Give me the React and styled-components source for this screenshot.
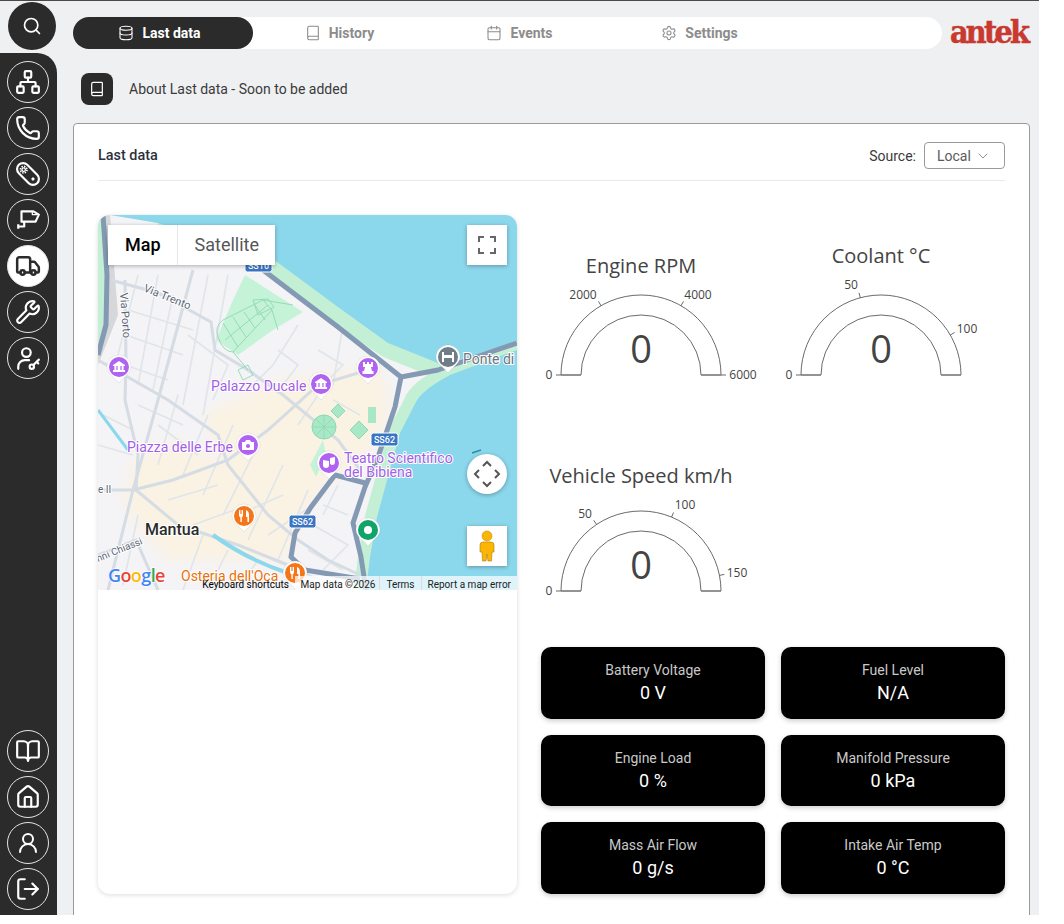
import React from "react";
import styled, { createGlobalStyle } from "styled-components";
import {
  Search,
  Database,
  Book,
  BookOpen,
  Calendar,
  Settings,
  Network,
  Phone,
  Truck,
  Wrench,
  House,
  UserRound,
  LogOut,
  ChevronDown,
} from "lucide-react";

const GlobalStyle = createGlobalStyle`
  body {
    margin: 0;
    background: #fff;
    font-family: Roboto, "Liberation Sans", sans-serif;
  }
`;

const BeltIcon = () => (
  <svg width="26" height="26" viewBox="0 0 24 24" fill="none" stroke="currentColor" strokeWidth="2">
    <rect x="0" y="6.5" width="24" height="11" rx="5.5" transform="rotate(45 12 12)" />
    <circle cx="8" cy="8" r="3" strokeDasharray="1.3 1.05" strokeWidth="1.6" />
    <circle cx="8" cy="8" r="1.6" strokeWidth="1.2" />
    <circle cx="16.6" cy="16.6" r="1.1" fill="currentColor" strokeWidth="0.8" />
  </svg>
);

const CameraIcon = () => (
  <svg width="26" height="26" viewBox="0 0 24 24" fill="none" stroke="currentColor" strokeWidth="2" strokeLinejoin="round">
    <path d="M6 4 H17 L22 7 L19 13.5 H6 Z" />
    <path d="M16 4 V7 H22" strokeWidth="1.2" />
    <path d="M8.5 13.5 V18 H3 M3 16 V20" />
  </svg>
);

const UserKeyIcon = () => (
  <svg width="26" height="26" viewBox="0 0 24 24" fill="none" stroke="currentColor" strokeWidth="2" strokeLinecap="round">
    <circle cx="10.5" cy="7" r="4" />
    <path d="M3 22v-2a6 6 0 0 1 6-6h4" />
    <circle cx="15.5" cy="20" r="2" />
    <path d="M17 18.5l5-5M20 15.5l1.5 1.5" />
  </svg>
);

const topLinks = [
  { key: "network", icon: <Network size={26} /> },
  { key: "phone", icon: <Phone size={26} /> },
  { key: "belt", icon: <BeltIcon /> },
  { key: "camera", icon: <CameraIcon /> },
  { key: "truck", icon: <Truck size={26} strokeWidth={2.3} />, active: true },
  { key: "wrench", icon: <Wrench size={26} /> },
  { key: "user-key", icon: <UserKeyIcon /> },
];

const bottomLinks = [
  { key: "book", icon: <BookOpen size={26} /> },
  { key: "home", icon: <House size={26} /> },
  { key: "user", icon: <UserRound size={24} /> },
  { key: "logout", icon: <LogOut size={26} /> },
];

const tabs = [
  { label: "Last data", icon: Database, active: true },
  { label: "History", icon: Book },
  { label: "Events", icon: Calendar },
  { label: "Settings", icon: Settings },
];

const gauges = [
  {
    title: "Engine RPM",
    titleY: 58,
    max: 6000,
    ticks: [
      { value: 0, label: "0", x: 8, y: 164 },
      { value: 2000, label: "2000", x: 42, y: 84 },
      { value: 4000, label: "4000", x: 157, y: 84 },
      { value: 6000, label: "6000", x: 202, y: 164 },
    ],
  },
  {
    title: "Coolant °C",
    titleY: 48,
    max: 120,
    ticks: [
      { value: 0, label: "0", x: 8, y: 164 },
      { value: 50, label: "50", x: 70, y: 74 },
      { value: 100, label: "100", x: 186, y: 118 },
    ],
  },
  {
    title: "Vehicle Speed km/h",
    titleY: 52,
    max: 160,
    ticks: [
      { value: 0, label: "0", x: 8, y: 164 },
      { value: 50, label: "50", x: 44, y: 87 },
      { value: 100, label: "100", x: 144, y: 78 },
      { value: 150, label: "150", x: 196, y: 146 },
    ],
  },
];

const tiles = [
  { label: "Battery Voltage", value: "0 V" },
  { label: "Fuel Level", value: "N/A" },
  { label: "Engine Load", value: "0 %" },
  { label: "Manifold Pressure", value: "0 kPa" },
  { label: "Mass Air Flow", value: "0 g/s" },
  { label: "Intake Air Temp", value: "0 °C" },
];

const Gauge = ({ title, titleY, max, ticks }) => {
  const cx = 100;
  const cy = 160;
  return (
    <GaugeSvg viewBox="0 0 224 200">
      <GaugeTitle x={cx} y={titleY}>{title}</GaugeTitle>
      <path
        d={`M${cx - 80} ${cy} A80 80 0 0 1 ${cx + 80} ${cy} H${cx + 60} A60 60 0 0 0 ${cx - 60} ${cy} Z`}
        fill="#fff"
        stroke="#444"
        strokeWidth="0.8"
      />
      <path d={`M${cx - 80} ${cy}H${cx - 60}M${cx + 60} ${cy}H${cx + 80}`} stroke="#888" strokeWidth="1.4" />
      {ticks.map((tick) => {
        const angle = Math.PI * (1 - tick.value / max);
        return (
          <g key={tick.label}>
            <line
              x1={cx + 80 * Math.cos(angle)}
              y1={cy - 80 * Math.sin(angle)}
              x2={cx + 85 * Math.cos(angle)}
              y2={cy - 85 * Math.sin(angle)}
              stroke="#444"
              strokeWidth="0.8"
            />
            <GaugeTick x={tick.x} y={tick.y}>{tick.label}</GaugeTick>
          </g>
        );
      })}
      <GaugeValue x={cx} y={148}>0</GaugeValue>
    </GaugeSvg>
  );
};

const majorRoads = [
  "M5 0 L9 60 L8 110 L0 140",
  "M165 55 L240 112 L303 162 L297 192 L280 242 L267 272 L255 308 L263 342 L268 375",
  "M303 162 L340 155 L419 128",
  "M267 268 L237 260 L213 292 L197 318 L193 342 L207 355 L262 364",
];

const mediumRoads = [
  "M13 65 L60 78 L113 107 L117 135 L150 155 L185 180 L240 225 L262 255",
  "M27 65 L28 150 L27 185 L40 240 L38 275",
  "M0 145 L70 185 L120 220 L130 250 L170 300 L200 325 L230 345 L262 360",
  "M35 275 L75 265 L130 245 L170 215 L220 170 L270 155",
  "M38 275 L80 310 L140 330 L190 350 L210 358",
  "M95 55 L60 185 L35 275 L10 375",
  "M38 275 L0 275",
  "M0 340 L38 325 L60 375",
];

const minorRoads = [
  "M40 60 L20 140", "M60 60 L40 170", "M75 80 L55 175", "M110 60 L85 190", "M130 60 L105 200",
  "M30 95 L95 115", "M28 120 L85 140", "M27 150 L70 165", "M40 190 L85 210", "M60 210 L100 240",
  "M90 120 L130 150 L115 185", "M150 175 L175 150 L200 110", "M180 135 L200 150 L185 170",
  "M220 135 L245 150 L225 170", "M245 110 L235 170", "M80 180 L60 250", "M110 200 L85 260",
  "M135 210 L105 280", "M160 230 L125 300", "M185 250 L150 325", "M210 275 L180 345",
  "M70 285 L120 270", "M95 310 L150 290", "M140 300 L185 280", "M170 320 L215 290", "M40 300 L25 370",
  "M105 320 L85 375", "M130 335 L110 375", "M160 345 L140 375", "M215 310 L250 330 L225 355",
  "M225 290 L250 300", "M240 270 L225 300", "M210 335 L245 355", "M5 200 L35 215", "M0 230 L35 240",
  "M175 345 L235 370", "M200 210 L220 180", "M235 185 L262 200",
];

const MapPin = ({ x, y, color, children }) => (
  <g transform={`translate(${x} ${y})`}>
    <path d="M-12 0 A12 12 0 1 1 12 0 C12 7 4 10 0 16 C-4 10 -12 7 -12 0 Z" fill="#fff" stroke="rgba(0,0,0,.12)" strokeWidth="0.6" />
    <circle r="10" fill={color} />
    {children}
  </g>
);

const museum = (
  <path d="M-6 -2 L0 -6 L6 -2 V-1 H4.6 V3 H6 V5 H-6 V3 H-4.6 V-1 H-6 Z M-2.6 -1 V3 H-1.4 V-1 Z M1.4 -1 V3 H2.6 V-1 Z" fill="#fff" fillRule="evenodd" />
);

const fork = (
  <path d="M-5 -6 V-1 Q-5 1 -3.6 1.4 V6 H-2.2 V1.4 Q-1 1 -1 -1 V-6 H-2 V-2 H-2.6 V-6 H-3.4 V-2 H-4 V-6 Z M2 -6 Q5 -5 5 -1 V6 H3.4 V1 H2 Z" fill="#fff" />
);

const Shield = ({ x, y, label }) => (
  <g transform={`translate(${x} ${y})`}>
    <rect width="27" height="13" rx="2.5" fill="#3a75c4" stroke="#fff" strokeWidth="1" />
    <ShieldText x="13.5" y="10">{label}</ShieldText>
  </g>
);

const CityMap = () => (
  <MapSvg viewBox="0 0 419 375">
    <defs>
      <filter id="soft" x="-10%" y="-10%" width="120%" height="120%">
        <feGaussianBlur stdDeviation="7" />
      </filter>
    </defs>
    <rect width="419" height="375" fill="#f4f3f6" />
    <path
      d="M125 250 L105 200 L180 165 L283 152 L292 200 L262 250 L232 262 L205 300 L188 345 L120 345 L70 345 L25 290 L35 245 L80 225 Z"
      fill="#faf2e2"
      filter="url(#soft)"
    />
    <path d="M0 0 H12 L20 100 L0 150 Z" fill="#d5d7d8" />
    <path d="M0 0 H7 V100 L0 130 Z" fill="#c3efd5" />
    <path d="M147 60 L205 97 L175 115 L140 140 L118 125 L135 85 Z" fill="#c5f3d8" />
    <path
      d="M60 8 L170 48 L240 100 L290 133 L345 155 L360 158 L419 130 M350 160 Q320 175 316 187 L300 218 L277 302 L270 342 L266 375"
      fill="none"
      stroke="#c3efd5"
      strokeWidth="20"
    />
    <path
      d="M12 0 H419 V126 L345 150 L290 128 L240 92 L175 44 L60 8 Z M352 160 L419 135 V375 H268 L272 342 L279 302 L302 218 L318 187 Q324 175 352 160 Z"
      fill="#8bd7ec"
    />
    {minorRoads.map((d) => (
      <path key={d} d={d} fill="none" stroke="#e0e5ea" strokeWidth="1.6" />
    ))}
    {mediumRoads.map((d) => (
      <path key={d} d={d} fill="none" stroke="#d5dce4" strokeWidth="3" />
    ))}
    {majorRoads.map((d) => (
      <path key={d} d={d} fill="none" stroke="#8499b3" strokeWidth="5" strokeLinejoin="round" />
    ))}
    <g fill="none" stroke="#8fd8b3" strokeWidth="0.9">
      <path d="M120 122 Q116 112 125 105 L165 85 L174 95 L135 137 Q125 137 120 122 Z" />
      <path d="M127 125 L170 90 M125 108 L140 132 M135 102 L148 122 M146 97 L157 113 M157 90 L167 105 M165 85 L195 90 M174 95 L180 115 M135 137 L150 155" />
      <path d="M155 85 L170 84 L176 92 L160 100 Z" />
      <path d="M140 155 L150 150 L155 160 L145 165 Z" />
    </g>
    <circle cx="226" cy="212" r="12" fill="#a9e8c6" stroke="#8fd8b3" />
    <path d="M226 200V224M214 212H238M218 204L234 220M234 204L218 220" stroke="#8fd8b3" strokeWidth="0.8" />
    <path d="M261 206 L270 215 L261 224 L252 215 Z M240 189 L247 196 L240 203 L233 196 Z" fill="#a9e8c6" stroke="#8fd8b3" />
    <rect x="270" y="192" width="8" height="16" fill="#a9e8c6" />
    <path d="M212 250 L225 225 L228 240 L218 262 Z" fill="#c5f3d8" />
    <path d="M0 195 L30 235" stroke="#8bd7ec" strokeWidth="3" />
    <path d="M115 320 Q150 345 190 358" fill="none" stroke="#8bd7ec" strokeWidth="4" />
    <path d="M374 238 L383 235" stroke="#2a8f9a" strokeWidth="1.5" />

    <Shield x={147} y={44} label="SS10" />
    <Shield x={273} y={218} label="SS62" />
    <Shield x={191} y={300} label="SS62" />

    <MapLabel transform="translate(22 78) rotate(86)" $color="#5b6675" $size={11}>Via Porto</MapLabel>
    <MapLabel transform="translate(45 76) rotate(22)" $color="#5b6675" $size={11}>Via Trento</MapLabel>
    <MapLabel x={113} y={176} $color="#a35ee8" $size={14}>Palazzo Ducale</MapLabel>
    <MapLabel x={29} y={237} $color="#a35ee8" $size={14}>Piazza delle Erbe</MapLabel>
    <MapLabel x={246} y={248} $color="#a35ee8" $size={14}>Teatro Scientifico</MapLabel>
    <MapLabel x={246} y={262} $color="#a35ee8" $size={14}>del Bibiena</MapLabel>
    <MapLabel x={365} y={149} $color="#6c7680" $size={14}>Ponte di</MapLabel>
    <MapLabel x={47} y={320} $color="#2b2b2b" $size={16} $weight={500}>Mantua</MapLabel>
    <MapLabel x={0} y={278} $color="#5b6675" $size={10}>e II</MapLabel>
    <MapLabel transform="translate(0 347) rotate(-22)" $color="#5b6675" $size={10}>nni Chiassi</MapLabel>
    <MapLabel x={83} y={366} $color="#e8710a" $size={14}>Osteria dell'Oca</MapLabel>

    <MapPin x={21} y={152} color="#b062f0">{museum}</MapPin>
    <MapPin x={223} y={169} color="#b062f0">{museum}</MapPin>
    <MapPin x={270} y={153} color="#b062f0">
      <path d="M-5 -6 H-3 V-4 H-1 V-6 H1 V-4 H3 V-6 H5 V-1 H3 L4 3 H5.5 V6 H-5.5 V3 H-4 L-3 -1 H-5 Z" fill="#fff" />
    </MapPin>
    <MapPin x={350} y={142} color="#6f7d88">
      <path d="M-6 -5 H-4 V-2 H4 V-5 H6 V5 H4 V1 H-4 V5 H-6 Z M-1 -2 H1 V1 H-1 Z" fill="#fff" />
    </MapPin>
    <MapPin x={150} y={230} color="#b062f0">
      <path d="M-6 -3 H-3 L-2 -5 H2 L3 -3 H6 V5 H-6 Z" fill="#fff" />
      <circle cy="1" r="2" fill="#b062f0" />
    </MapPin>
    <MapPin x={231} y={248} color="#b062f0">
      <path d="M-6 -3 L0 -2 V2 Q0 5 -3 5 Q-6 5 -6 2 Z M1 -5 L6 -6 V-1 Q6 2 3 2 L1 1 Z" fill="#fff" />
    </MapPin>
    <MapPin x={146} y={301} color="#f5761a">{fork}</MapPin>
    <MapPin x={270} y={315} color="#10a36a">
      <circle r="4" fill="#fff" />
    </MapPin>
    <MapPin x={197} y={358} color="#f5761a">{fork}</MapPin>

    <GoogleMark x={10} y={367}>
      <tspan fill="#4285f4">G</tspan>
      <tspan fill="#ea4335">o</tspan>
      <tspan fill="#fbbc05">o</tspan>
      <tspan fill="#4285f4">g</tspan>
      <tspan fill="#34a853">l</tspan>
      <tspan fill="#ea4335">e</tspan>
    </GoogleMark>
  </MapSvg>
);

export default function App() {
  return (
    <>
      <GlobalStyle />
      <Frame>
        <Rail>
          <SearchButton>
            <Search size={20} />
          </SearchButton>
          <Sidebar>
            <LinkGroup>
              {topLinks.map((link) => (
                <RoundLink key={link.key} $active={link.active}>{link.icon}</RoundLink>
              ))}
            </LinkGroup>
            <LinkGroup>
              {bottomLinks.map((link) => (
                <RoundLink key={link.key}>{link.icon}</RoundLink>
              ))}
            </LinkGroup>
          </Sidebar>
        </Rail>

        <Main>
          <TopBar>
            <TabBar>
              {tabs.map(({ label, icon: Icon, active }) => (
                <Tab key={label} $active={active}>
                  <Icon size={16} strokeWidth={1.6} />
                  {label}
                </Tab>
              ))}
            </TabBar>
            <Logo>antek</Logo>
          </TopBar>

          <AboutRow>
            <AboutIcon>
              <Book size={16} strokeWidth={1.8} />
            </AboutIcon>
            About Last data - Soon to be added
          </AboutRow>

          <Card>
            <CardHead>
              <CardTitle>Last data</CardTitle>
              <SourceField>
                Source:
                <SourceSelect>
                  Local
                  <ChevronDown size={16} strokeWidth={1.4} color="#8c8c8c" />
                </SourceSelect>
              </SourceField>
            </CardHead>

            <CardBody>
              <MapPanel>
                <MapBox>
                  <CityMap />
                  <MapTypes>
                    <MapType $active>Map</MapType>
                    <MapType>Satellite</MapType>
                  </MapTypes>
                  <FullscreenButton>
                    <svg width="18" height="18" viewBox="0 0 18 18" fill="none" stroke="#666" strokeWidth="2">
                      <path d="M1 6V1H6M12 1H17V6M17 12V17H12M6 17H1V12" />
                    </svg>
                  </FullscreenButton>
                  <RoseControl>
                    <svg width="28" height="28" viewBox="0 0 28 28" fill="none" stroke="#555" strokeWidth="2">
                      <path d="M10 6L14 2L18 6M10 22L14 26L18 22M6 10L2 14L6 18M22 10L26 14L22 18" />
                    </svg>
                  </RoseControl>
                  <PegmanButton>
                    <svg width="20" height="32" viewBox="0 0 20 32">
                      <circle cx="10" cy="6" r="5" fill="#fbb605" stroke="#c98b00" strokeWidth="0.6" />
                      <path d="M6 12 H14 Q17 12 17 15 V22 H15 L14.5 31 H11 L10 24 L9 31 H5.5 L5 22 H3 V15 Q3 12 6 12 Z" fill="#fbb605" stroke="#b07c00" strokeWidth="0.6" />
                    </svg>
                  </PegmanButton>
                  <KeyboardHint>Keyboard shortcuts</KeyboardHint>
                  <Attribution>
                    <AttributionItem>Map data ©2026</AttributionItem>
                    <AttributionItem>Terms</AttributionItem>
                    <AttributionItem>Report a map error</AttributionItem>
                  </Attribution>
                </MapBox>
              </MapPanel>

              <Readings>
                <GaugeGrid>
                  {gauges.map((gauge) => (
                    <Gauge key={gauge.title} {...gauge} />
                  ))}
                </GaugeGrid>
                <TileGrid>
                  {tiles.map((tile) => (
                    <Tile key={tile.label}>
                      <TileLabel>{tile.label}</TileLabel>
                      <TileValue>{tile.value}</TileValue>
                    </Tile>
                  ))}
                </TileGrid>
              </Readings>
            </CardBody>
          </Card>
        </Main>
      </Frame>
    </>
  );
}

const Frame = styled.div`
  width: 1039px;
  height: 915px;
  display: flex;
  overflow: hidden;
  box-sizing: border-box;
  border-top: 1px solid #4a4a4a;
  background: #eff0f2;
`;

const Rail = styled.aside`
  width: 57px;
  flex: none;
  display: flex;
  flex-direction: column;
`;

const SearchButton = styled.div`
  width: 48px;
  height: 48px;
  margin: 1px 0 3px 8px;
  flex: none;
  border-radius: 50%;
  background: #2b2b2b;
  color: #fff;
  display: flex;
  align-items: center;
  justify-content: center;
`;

const Sidebar = styled.nav`
  flex: 1;
  padding: 8px 0 5px 7px;
  background: #2b2b2b;
  border-top-right-radius: 20px;
  display: flex;
  flex-direction: column;
  justify-content: space-between;
`;

const LinkGroup = styled.div`
  display: flex;
  flex-direction: column;
  gap: 4px;
`;

const RoundLink = styled.div`
  width: 42px;
  height: 42px;
  box-sizing: border-box;
  border-radius: 50%;
  border: 1px solid #e4e4e4;
  display: flex;
  align-items: center;
  justify-content: center;
  background: ${({ $active }) => ($active ? "#fff" : "transparent")};
  color: ${({ $active }) => ($active ? "#2b2b2b" : "#fff")};
`;

const Main = styled.main`
  flex: 1;
  min-width: 0;
  padding: 16px 9px 0 16px;
  display: flex;
  flex-direction: column;
`;

const TopBar = styled.header`
  display: flex;
  align-items: flex-start;
  height: 32px;
`;

const TabBar = styled.div`
  width: 869px;
  height: 32px;
  flex: none;
  border-radius: 16px;
  background: #fff;
  display: flex;
`;

const Tab = styled.div`
  width: 180px;
  height: 32px;
  padding-right: 7px;
  box-sizing: border-box;
  border-radius: 16px;
  display: flex;
  align-items: center;
  justify-content: center;
  gap: 8px;
  font-size: 14px;
  font-weight: 700;
  background: ${({ $active }) => ($active ? "#2b2b2b" : "transparent")};
  color: ${({ $active }) => ($active ? "#fff" : "#8c8c8c")};
`;

const Logo = styled.div`
  margin: -3px 0 0 8px;
  font-family: "DejaVu Serif", serif;
  font-stretch: condensed;
  font-weight: 700;
  font-size: 32px;
  line-height: 36px;
  letter-spacing: -2.8px;
  color: #c8392f;
  -webkit-text-stroke: 0.5px #c8392f;
`;

const AboutRow = styled.div`
  margin: 24px 0 18px 8px;
  display: flex;
  align-items: center;
  gap: 16px;
  font-size: 14px;
  color: #3a3a3a;
`;

const AboutIcon = styled.div`
  width: 32px;
  height: 32px;
  border-radius: 8px;
  background: #2b2b2b;
  color: #fff;
  display: flex;
  align-items: center;
  justify-content: center;
`;

const Card = styled.section`
  flex: 1;
  padding: 18px 24px 40px;
  background: #fff;
  border: 1px solid #9a9a9a;
  border-radius: 4px;
`;

const CardHead = styled.div`
  height: 27px;
  padding-bottom: 11px;
  border-bottom: 1px solid #e9e9e9;
  display: flex;
  align-items: center;
  justify-content: space-between;
`;

const CardTitle = styled.div`
  margin-top: -1px;
  font-size: 14.4px;
  font-weight: 500;
  color: #2b3040;
`;

const SourceField = styled.div`
  display: flex;
  align-items: center;
  gap: 8px;
  font-size: 14px;
  color: #3a3a3a;
`;

const SourceSelect = styled.div`
  width: 81px;
  height: 27px;
  box-sizing: border-box;
  padding: 0 13px 0 12px;
  border: 1px solid #9a9a9a;
  border-radius: 4px;
  display: flex;
  align-items: center;
  justify-content: space-between;
  color: #5a5a5a;
`;

const CardBody = styled.div`
  margin-top: 34px;
  display: grid;
  grid-template-columns: 419px 464px;
  gap: 24px;
`;

const MapPanel = styled.div`
  height: 679px;
  border-radius: 12px;
  background: #fff;
  box-shadow: 0 1px 5px rgba(0, 0, 0, 0.14);
  overflow: hidden;
`;

const MapBox = styled.div`
  position: relative;
  height: 375px;
`;

const MapSvg = styled.svg`
  display: block;
  width: 419px;
  height: 375px;
`;

const MapLabel = styled.text`
  font-family: Roboto, sans-serif;
  font-size: ${({ $size }) => $size}px;
  font-weight: ${({ $weight }) => $weight || 400};
  fill: ${({ $color }) => $color};
  stroke: #fff;
  stroke-width: 2px;
  paint-order: stroke;
`;

const ShieldText = styled.text`
  font-family: Roboto, sans-serif;
  font-size: 9px;
  font-weight: 500;
  fill: #fff;
  text-anchor: middle;
`;

const GoogleMark = styled.text`
  font-family: "Open Sans", sans-serif;
  font-size: 18px;
  font-weight: 600;
  letter-spacing: -0.6px;
  stroke: #fff;
  stroke-width: 1.5px;
  paint-order: stroke;
`;

const MapTypes = styled.div`
  position: absolute;
  top: 10px;
  left: 10px;
  display: flex;
  height: 40px;
  background: #fff;
  box-shadow: 0 1px 4px rgba(0, 0, 0, 0.3);
`;

const MapType = styled.div`
  padding: 0 16px 1px 17px;
  display: flex;
  align-items: center;
  font-size: 18px;
  font-weight: ${({ $active }) => ($active ? 500 : 400)};
  color: ${({ $active }) => ($active ? "#000" : "#565656")};
  & + & {
    border-left: 1px solid #e6e6e6;
  }
`;

const MapSquareButton = styled.div`
  position: absolute;
  left: 369px;
  width: 40px;
  height: 40px;
  background: #fff;
  box-shadow: 0 1px 4px rgba(0, 0, 0, 0.3);
  display: flex;
  align-items: center;
  justify-content: center;
`;

const FullscreenButton = styled(MapSquareButton)`
  top: 10px;
`;

const RoseControl = styled(MapSquareButton)`
  top: 239px;
  border-radius: 50%;
`;

const PegmanButton = styled(MapSquareButton)`
  top: 311px;
`;

const KeyboardHint = styled.div`
  position: absolute;
  right: 228px;
  bottom: 0;
  height: 14px;
  line-height: 17px;
  font-size: 10px;
  color: #000;
`;

const Attribution = styled.div`
  position: absolute;
  right: 0;
  bottom: 0;
  display: flex;
  height: 14px;
  background: rgba(255, 255, 255, 0.72);
`;

const AttributionItem = styled.div`
  padding: 0 6px;
  line-height: 17px;
  font-size: 10px;
  color: #222;
  & + & {
    border-left: 1px solid #dcdcdc;
  }
  &:first-child {
    margin-right: -2px;
  }
`;

const Readings = styled.div`
  display: flex;
  flex-direction: column;
  gap: 16px;
`;

const GaugeGrid = styled.div`
  display: grid;
  grid-template-columns: repeat(2, 224px);
  gap: 16px;
`;

const GaugeSvg = styled.svg`
  display: block;
  width: 224px;
  height: 200px;
  overflow: visible;
  font-family: "Open Sans", sans-serif;
`;

const GaugeTitle = styled.text`
  font-size: 20px;
  fill: #444;
  text-anchor: middle;
`;

const GaugeTick = styled.text`
  font-size: 12px;
  fill: #444;
  text-anchor: middle;
`;

const GaugeValue = styled.text`
  font-size: 38px;
  fill: #444;
  text-anchor: middle;
`;

const TileGrid = styled.div`
  display: grid;
  grid-template-columns: repeat(2, 224px);
  grid-auto-rows: 71.7px;
  gap: 16px;
`;

const Tile = styled.div`
  padding-bottom: 0.8px;
  border-radius: 10px;
  background: #000;
  box-shadow: 0 2px 5px rgba(0, 0, 0, 0.2);
  display: flex;
  flex-direction: column;
  align-items: center;
  justify-content: center;
  gap: 3px;
`;

const TileLabel = styled.div`
  font-size: 14px;
  line-height: 18px;
  color: #c9c9c9;
`;

const TileValue = styled.div`
  font-size: 18px;
  line-height: 22px;
  color: #fff;
`;
